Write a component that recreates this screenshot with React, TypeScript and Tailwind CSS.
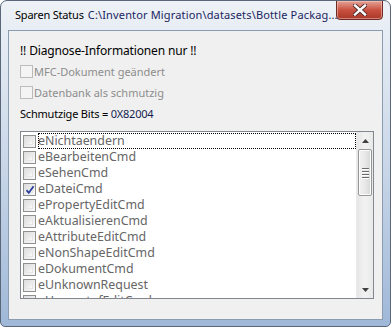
import React from "react";

const items = [
  "eNichtaendern",
  "eBearbeitenCmd",
  "eSehenCmd",
  "eDateiCmd",
  "ePropertyEditCmd",
  "eAktualisierenCmd",
  "eAttributeEditCmd",
  "eNonShapeEditCmd",
  "eDokumentCmd",
  "eUnknownRequest",
  "eUmgestufEditCmd",
];

function Box({ checked = false, disabled = false }: { checked?: boolean; disabled?: boolean }) {
  return (
    <div
      className={
        "relative w-[13px] h-[13px] shrink-0 border " +
        (disabled ? "border-[#bcbcbc] bg-[#f4f4f4]" : "border-[#8e8f8f] bg-gradient-to-br from-[#dcdcdc] to-[#fafafa]")
      }
    >
      {!disabled && <div className="absolute inset-[2px] border border-[#e6e6e6] bg-gradient-to-br from-[#e2e2e2] to-[#fbfbfb]" />}
      {checked && (
        <svg className="absolute left-[1px] top-[1px]" width="10" height="10" viewBox="0 0 10 10">
          <path d="M1.5 5.2 L3.8 7.8 L8.6 1.2" fill="none" stroke="#2a3f9d" strokeWidth="1.8" />
        </svg>
      )}
    </div>
  );
}

export default function App() {
  const font = { fontFamily: '"Noto Sans", "Open Sans", sans-serif' };
  return (
    <div
      className="relative w-[391px] h-[327px] flex flex-col rounded-t-[7px] rounded-b-[5px] border border-[#5a6778] bg-gradient-to-b from-[#eef2f7] via-[#c9d7e8] to-[#9fb8d8] overflow-hidden text-[12px] leading-[16px]"
      style={font}
    >
      {/* title bar */}
      <div className="h-[29px] flex items-center pl-[14px] pb-[1px] whitespace-nowrap text-[11px]">
        <span className="text-black tracking-[-0.2px]">Sparen Status</span>
        <span className="ml-[4px] text-[#1a2560] tracking-[0.15px]">C:\Inventor Migration\datasets\Bottle Packag...</span>
      </div>
      <div className="absolute top-[-1px] right-[7px] w-[47px] h-[20px] rounded-b-[4px] border border-[#6b2a24] bg-gradient-to-b from-[#e3a398] via-[#c9503f] to-[#a9382a] flex items-center justify-center shadow-[inset_0_0_0_1px_rgba(255,210,200,0.5)]">
        <svg width="14" height="12" viewBox="0 0 14 12">
          <path d="M2 1.5 L12 10.5 M12 1.5 L2 10.5" stroke="#4a2a2a" strokeWidth="4.2" strokeLinecap="square" />
          <path d="M2 1.5 L12 10.5 M12 1.5 L2 10.5" stroke="#ffffff" strokeWidth="2.4" strokeLinecap="square" />
        </svg>
      </div>

      {/* client */}
      <div className="flex-1 mx-[7px] mb-[6px] border border-[#8b9bb0] bg-[#f0f0f0] pl-[11px] pt-[12px] flex flex-col">
        <div className="h-[16px] text-black tracking-[-0.15px]">!! Diagnose-Informationen nur !!</div>
        <div className="h-[21px] mt-[2px] flex items-center gap-[1px] text-[#8d8d8d] text-[11px]">
          <Box disabled />
          <span>MFC-Dokument geändert</span>
        </div>
        <div className="h-[21px] flex items-center gap-[1px] text-[#8d8d8d] text-[11px]">
          <Box disabled />
          <span>Datenbank als schmutzig</span>
        </div>
        <div className="h-[21px] flex items-center text-black text-[11px] tracking-[-0.2px]">
          <span>Schmutzige Bits =&nbsp;</span>
          <span className="text-[#141c50]">0X82004</span>
        </div>

        {/* list box */}
        <div className="mt-[7px] w-[354px] h-[168px] border border-[#828790] bg-white flex">
          <div className="flex-1 overflow-hidden pt-[1px] pl-[2px]">
            {items.map((t, i) => (
              <div key={t} className="relative h-[16px] flex items-center gap-[2px] text-[#666666] whitespace-nowrap text-[12.4px] leading-[16px]">
                <Box checked={i === 3} />
                <span>{t}</span>
                {i === 0 && (
                  <div className="absolute left-[15px] right-[0px] top-0 bottom-0 border border-dotted border-black" />
                )}
              </div>
            ))}
          </div>
          {/* scrollbar */}
          <div className="w-[17px] flex flex-col bg-gradient-to-r from-[#e6e6e6] via-[#f2f2f2] to-[#e9e9e9] border-l border-[#eaeaea]">
            <div className="h-[17px] flex items-center justify-center">
              <svg width="7" height="4" viewBox="0 0 7 4">
                <path d="M0 4 L3.5 0 L7 4 Z" fill="#404040" />
              </svg>
            </div>
            <div className="mx-[1px] h-[47px] rounded-[2px] border border-[#979797] bg-gradient-to-r from-[#f2f2f2] via-[#e8e8e8] to-[#d6d6d6] flex flex-col items-center justify-center gap-[1px] shadow-[inset_0_0_0_1px_#fbfbfb]">
              <div className="w-[7px] h-[1px] bg-[#6b6b6b] shadow-[0_1px_0_#fff]" />
              <div className="w-[7px] h-[1px] bg-[#6b6b6b] shadow-[0_1px_0_#fff] mt-[1px]" />
              <div className="w-[7px] h-[1px] bg-[#6b6b6b] shadow-[0_1px_0_#fff] mt-[1px]" />
              <div className="w-[7px] h-[1px] bg-[#6b6b6b] shadow-[0_1px_0_#fff] mt-[1px]" />
            </div>
            <div className="flex-1" />
            <div className="h-[17px] flex items-center justify-center">
              <svg width="7" height="4" viewBox="0 0 7 4">
                <path d="M0 0 L7 0 L3.5 4 Z" fill="#404040" />
              </svg>
            </div>
          </div>
        </div>
      </div>
    </div>
  );
}
